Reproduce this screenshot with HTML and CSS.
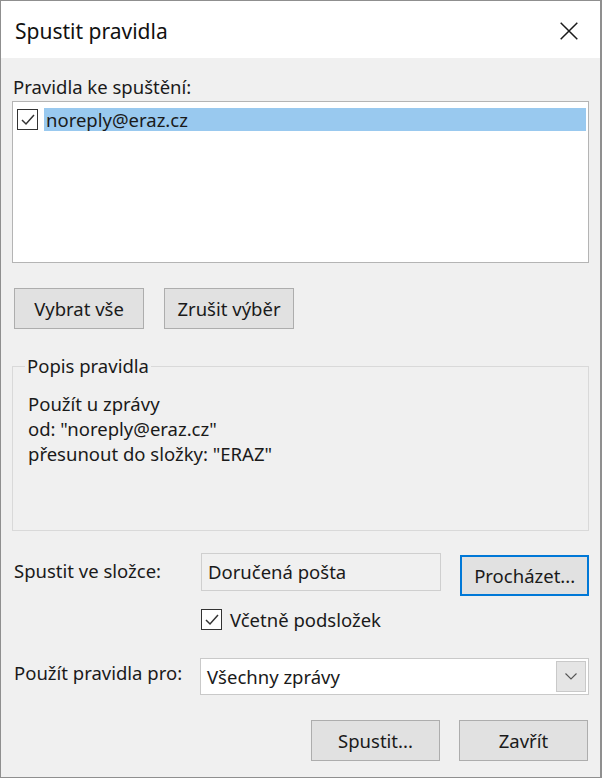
FILE: index.html
```html
<!DOCTYPE html>
<html lang="cs">
<head>
<meta charset="utf-8">
<link rel="stylesheet" href="styles.css">
</head>
<body>
<div class="window">
  <div class="titlebar">
    <span class="title">Spustit pravidla</span>
    <svg class="close" width="18" height="18" viewBox="0 0 18 18"><path d="M0.7 0.7 L17.3 17.3 M17.3 0.7 L0.7 17.3" stroke="#1a1a1a" stroke-width="1.5" fill="none"/></svg>
  </div>
  <div class="content">
    <div class="label">Pravidla ke spuštění:</div>
    <div class="listbox">
      <div class="row">
        <span class="chk"><svg width="14" height="12" viewBox="0 0 14 12"><path d="M1 6 L5 10 L13 1" stroke="#333" stroke-width="1.5" fill="none"/></svg></span>
        <span class="sel">noreply@eraz.cz</span>
      </div>
    </div>
    <div class="btnrow">
      <button class="btn btn-sm">Vybrat vše</button>
      <button class="btn btn-sm">Zrušit výběr</button>
    </div>
    <fieldset class="group">
      <legend>Popis pravidla</legend>
      <div class="desc">
        <div>Použít u zprávy</div>
        <div>od: "noreply@eraz.cz"</div>
        <div>přesunout do složky: "ERAZ"</div>
      </div>
    </fieldset>
    <div class="folder-row">
      <span class="flabel">Spustit ve složce:</span>
      <div class="textbox">Doručená pošta</div>
      <button class="btn btn-focus">Procházet...</button>
    </div>
    <div class="sub-row">
      <span class="chk"><svg width="14" height="12" viewBox="0 0 14 12"><path d="M1 6 L5 10 L13 1" stroke="#333" stroke-width="1.5" fill="none"/></svg></span>
      <span>Včetně podsložek</span>
    </div>
    <div class="apply-row">
      <span class="flabel">Použít pravidla pro:</span>
      <div class="combo">
        <span class="combo-text">Všechny zprávy</span>
        <span class="combo-btn"><svg width="12" height="7" viewBox="0 0 12 7"><path d="M0.5 0.5 L6 6 L11.5 0.5" stroke="#555" stroke-width="1.1" fill="none"/></svg></span>
      </div>
    </div>
    <div class="footer">
      <button class="btn">Spustit...</button>
      <button class="btn">Zavřít</button>
    </div>
  </div>
</div>
</body>
</html>
```
FILE: styles.css
```css
* { box-sizing: border-box; }
html, body { margin: 0; padding: 0; background: #ffffff; }
body { font-family: "Noto Sans", "Open Sans", sans-serif; font-size: 18.5px; color: #1a1a1a; }
.window {
  width: 602px; height: 778px;
  border: 1px solid #8f8f8f;
  border-right-width: 2px;
  background: #f0f0f0;
  display: flex; flex-direction: column;
}
.titlebar {
  height: 57px; background: #ffffff; flex: none;
  display: flex; align-items: center; justify-content: space-between;
  padding: 0 22px 0 14px;
}
.title { font-size: 21px; line-height: 26px; color: #111; margin-top: 2px; }
.close { display: block; margin-top: 2px; }
.content { padding: 17px 11px 0 11px; }
.label { line-height: 24px; height: 24px; margin-bottom: 2px; padding-left: 1px; }
.listbox {
  height: 162px; background: #fff;
  border: 1px solid #b4b4b4;
  padding: 6px 2px 0 4px;
}
.row { display: flex; align-items: center; height: 23px; }
.chk {
  width: 21px; height: 21px; border: 1px solid #333; background: #fff;
  display: flex; align-items: center; justify-content: center;
  flex: none;
}
.row .chk { margin-right: 6px; }
.sel { flex: 1; background: #99c9ef; height: 23px; line-height: 23px; padding-left: 2px; }
.btnrow { display: flex; gap: 20px; margin-top: 25px; padding-left: 2px; }
.btn {
  font-family: inherit; font-size: 18.5px; color: #1a1a1a; line-height: 24px;
  width: 129px; height: 41px;
  background: #e1e1e1; border: 1px solid #adadad; padding: 0;
}
.btn-sm { width: 130px; }
.group {
  margin: 27px 0 0 0; padding: 0 12px; height: 175px;
  border: 1px solid #d9d9d9; border-radius: 0;
}
.group legend { padding: 0 2px; margin-left: 0; line-height: 20px; }
.desc { padding: 15px 0 0 3px; line-height: 25px; }
.folder-row { display: flex; align-items: flex-start; margin-top: 22px; padding-left: 2px; }
.flabel { width: 187px; flex: none; }
.folder-row .flabel { line-height: 36px; }
.textbox {
  width: 241px; height: 38px; border: 1px solid #cfcfcf; background: #f0f0f0;
  line-height: 36px; padding-left: 6px;
}
.btn-focus { margin-left: 19px; border: 2px solid #0078d7; margin-top: 2px; }
.sub-row { display: flex; align-items: center; gap: 8px; margin: 13px 0 0 189px; height: 21px; }
.apply-row { display: flex; align-items: flex-start; margin-top: 28px; padding-left: 2px; }
.apply-row .flabel { line-height: 30px; }
.combo {
  width: 390px; height: 37px; margin-left: -1px;
  background: #fff; border: 1px solid #c9c9c9;
  display: flex; align-items: center; justify-content: space-between;
  padding: 0 2px 0 6px;
}
.combo-btn {
  width: 30px; height: 31px; background: #e5e5e5; border: 1px solid #c9c9c9;
  display: flex; align-items: center; justify-content: center;
}
.footer { display: flex; justify-content: flex-end; gap: 19px; margin-top: 25px; padding-right: 1px; }
.footer .btn { width: 129px; }
```
